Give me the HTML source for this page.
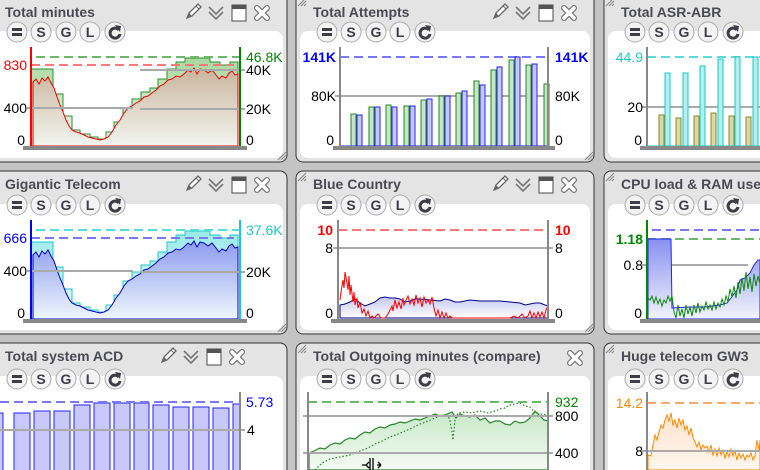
<!DOCTYPE html>
<html><head><meta charset="utf-8"><style>
html,body{margin:0;padding:0;background:#c4c4c4;overflow:hidden}
svg{display:block;font-family:"Liberation Sans",sans-serif}
.t{font-weight:bold;font-size:14px;fill:#4a4a55}
.l{font-size:14px;fill:#000}
.r{font-size:14px;fill:#000;text-anchor:end}
.b{font-weight:bold;font-size:14px;fill:#3d3d48;text-anchor:middle}
</style></head><body>
<svg width="760" height="470" viewBox="0 0 760 470" xmlns="http://www.w3.org/2000/svg">
<defs>
<linearGradient id="gBrown" x1="0" y1="0" x2="0" y2="1"><stop offset="0" stop-color="#c9b49c"/><stop offset="1" stop-color="#f2f5ef"/></linearGradient>
<linearGradient id="gGreen" x1="0" y1="0" x2="0" y2="1"><stop offset="0" stop-color="#a8d8a0"/><stop offset="1" stop-color="#eef7ee"/></linearGradient>
<linearGradient id="gBlue" x1="0" y1="0" x2="0" y2="1"><stop offset="0" stop-color="#8d9cf0"/><stop offset="1" stop-color="#eef6fd"/></linearGradient>
<linearGradient id="gCyan" x1="0" y1="0" x2="0" y2="1"><stop offset="0" stop-color="#9beaea"/><stop offset="1" stop-color="#e8fafa"/></linearGradient>
<linearGradient id="gLav" x1="0" y1="0" x2="0" y2="1"><stop offset="0" stop-color="#c4c8f0"/><stop offset="1" stop-color="#ffffff"/></linearGradient>
<linearGradient id="gCpu" x1="0" y1="0" x2="0" y2="1"><stop offset="0" stop-color="#8890f0"/><stop offset="1" stop-color="#f2f4fb"/></linearGradient>
<linearGradient id="gOut" x1="0" y1="0" x2="0" y2="1"><stop offset="0" stop-color="#c8e8c8"/><stop offset="1" stop-color="#f4fbf4"/></linearGradient>
<linearGradient id="gOr" x1="0" y1="0" x2="0" y2="1"><stop offset="0" stop-color="#fde3cc"/><stop offset="1" stop-color="#fff6ee"/></linearGradient>
<g id="btns">
<circle cx="0" cy="0" r="10" fill="#f3f3f3" stroke="#aaa"/><rect x="-5" y="-4" width="10" height="3" fill="#3d3d48"/><rect x="-5" y="1" width="10" height="3" fill="#3d3d48"/>
<circle cx="24" cy="0" r="10" fill="#f3f3f3" stroke="#aaa"/><text x="24" y="5" class="b">S</text>
<circle cx="49" cy="0" r="10" fill="#f3f3f3" stroke="#aaa"/><text x="49" y="5" class="b">G</text>
<circle cx="73" cy="0" r="10" fill="#f3f3f3" stroke="#aaa"/><text x="73" y="5" class="b">L</text>
<circle cx="98" cy="0" r="10" fill="#f3f3f3" stroke="#aaa"/><path d="M102 -2 A5 5 0 1 0 103 2" fill="none" stroke="#3d3d48" stroke-width="3"/><path d="M98 -7 L104 -6 L103 0 Z" fill="#3d3d48"/>
</g>
<g id="xic"><path d="M-5 -5 L5 5 M5 -5 L-5 5" stroke="#777" stroke-width="6" stroke-linecap="round"/><path d="M-5 -5 L5 5 M5 -5 L-5 5" stroke="#fff" stroke-width="3.5" stroke-linecap="round"/></g>
<g id="icons">
<path d="M0 14 L2 9 L11 0 L14 3 L5 12 Z" fill="#fff" stroke="#666" stroke-width="1.3"/><path d="M9 2 L12 5" stroke="#666"/><path d="M0 14 L2 9 L5 12Z" fill="#666"/>
<path d="M22 3 L29 10 L36 3 M22 8 L29 15 L36 8" fill="none" stroke="#777" stroke-width="1.6"/>
<rect x="45" y="1" width="14" height="16" fill="#fff" stroke="#666" stroke-width="1.2"/><rect x="45" y="1" width="14" height="4" fill="#555"/>
<use href="#xic" x="75" y="9"/>
</g>
<path id="hatch" d="M0 8 L8 0 M3 8 L8 3 M6 8 L8 6" stroke="#888" stroke-width="1"/>
</defs>

<rect x="-10" y="-10" width="297" height="172" rx="7" fill="#e4e4e4" stroke="#333"/>
<rect x="-6" y="31" width="289" height="127" rx="8" fill="#fff"/>
<rect x="296" y="-10" width="298" height="172" rx="7" fill="#e4e4e4" stroke="#333"/>
<rect x="300" y="31" width="290" height="127" rx="8" fill="#fff"/>
<rect x="604" y="-10" width="170" height="172" rx="7" fill="#e4e4e4" stroke="#333"/>
<rect x="608" y="31" width="170" height="127" rx="8" fill="#fff"/>
<rect x="-10" y="171" width="297" height="163" rx="7" fill="#e4e4e4" stroke="#333"/>
<rect x="-6" y="204" width="289" height="126" rx="8" fill="#fff"/>
<rect x="296" y="171" width="298" height="163" rx="7" fill="#e4e4e4" stroke="#333"/>
<rect x="300" y="204" width="290" height="126" rx="8" fill="#fff"/>
<rect x="604" y="171" width="170" height="163" rx="7" fill="#e4e4e4" stroke="#333"/>
<rect x="608" y="204" width="170" height="126" rx="8" fill="#fff"/>
<rect x="-10" y="343" width="297" height="140" rx="7" fill="#e4e4e4" stroke="#333"/>
<rect x="-6" y="376" width="289" height="110" rx="8" fill="#fff"/>
<rect x="296" y="343" width="298" height="140" rx="7" fill="#e4e4e4" stroke="#333"/>
<rect x="300" y="376" width="290" height="110" rx="8" fill="#fff"/>
<rect x="604" y="343" width="170" height="140" rx="7" fill="#e4e4e4" stroke="#333"/>
<rect x="608" y="376" width="170" height="110" rx="8" fill="#fff"/>

<use href="#hatch" x="278" y="152"/><use href="#hatch" x="585" y="152"/>
<use href="#hatch" x="278" y="324"/><use href="#hatch" x="585" y="324"/>
<use href="#hatch" x="298" y="-2"/><use href="#hatch" x="606" y="-2"/>
<use href="#hatch" x="298" y="173"/><use href="#hatch" x="606" y="173"/><use href="#hatch" x="298" y="345"/><use href="#hatch" x="606" y="345"/>

<text x="5" y="17" class="t">Total minutes</text>
<text x="313" y="17" class="t">Total Attempts</text>
<text x="621" y="17" class="t">Total ASR-ABR</text>
<text x="5" y="189" class="t">Gigantic Telecom</text>
<text x="313" y="189" class="t">Blue Country</text>
<text x="621" y="189" class="t">CPU load &amp; RAM use</text>
<text x="5" y="361" class="t">Total system ACD</text>
<text x="313" y="361" class="t">Total Outgoing minutes (compare)</text>
<text x="621" y="361" class="t">Huge telecom GW3</text>

<use href="#icons" x="187" y="4"/><use href="#icons" x="494" y="4"/>
<use href="#icons" x="187" y="176"/><use href="#icons" x="494" y="176"/>
<use href="#icons" x="162" y="348"/><use href="#xic" x="575" y="358"/>

<use href="#btns" x="17" y="32"/><use href="#btns" x="327" y="32"/><use href="#btns" x="635" y="32"/>
<use href="#btns" x="17" y="205"/><use href="#btns" x="327" y="205"/><use href="#btns" x="635" y="205"/>
<use href="#btns" x="17" y="379"/><use href="#btns" x="327" y="379"/><use href="#btns" x="635" y="379"/>

<!-- Chart 1 -->
<path d="M31 146 L31 69 L53 69 L53 94 L63 94 L63 116 L72 116 L72 130 L80 130 L80 134 L90 134 L90 137 L98 137 L98 139 L106 139 L106 132 L114 132 L114 122 L123 122 L123 108 L132 108 L132 99 L141 99 L141 92 L150 92 L150 88 L158 88 L158 79 L167 79 L167 69 L176 69 L176 62 L185 62 L185 58 L210 58 L210 62 L220 62 L220 65 L230 65 L230 62 L238 62 L238 146 Z" fill="url(#gGreen)" stroke="#2f8f2f" stroke-width="1"/>
<path d="M33 146 L33 82 L36 79 L39 84 L42 78 L45 81 L48 77 L51 83 L54 88 L57 97 L60 105 L63 112 L66 120 L69 126 L72 130 L76 132 L80 133 L84 135 L88 137 L92 138 L96 139 L100 140 L104 139 L108 137 L112 132 L116 125 L120 120 L124 113 L128 108 L132 106 L136 103 L140 101 L144 97 L148 96 L152 93 L156 90 L160 86 L164 84 L168 80 L172 79 L176 76 L180 77 L184 74 L188 70 L191 72 L194 68 L197 74 L200 69 L204 70 L208 73 L212 70 L216 75 L219 79 L222 76 L226 78 L229 73 L232 71 L235 75 L238 74 L238 146 Z" fill="url(#gBrown)" stroke="#e00" stroke-width="1"/>
<line x1="36" y1="57" x2="240" y2="57" stroke="#6bb86b" stroke-width="2" stroke-dasharray="9,5"/>
<line x1="31" y1="65" x2="234" y2="65" stroke="#f77" stroke-width="2" stroke-dasharray="9,5"/>
<line x1="27" y1="108" x2="133" y2="108" stroke="#aaa" stroke-width="2"/>
<line x1="140" y1="109" x2="245" y2="109" stroke="#aaa" stroke-width="2"/>
<line x1="140" y1="70" x2="245" y2="70" stroke="#aaa" stroke-width="2"/>
<line x1="31" y1="47" x2="31" y2="147" stroke="#f00" stroke-width="2"/>
<line x1="240" y1="47" x2="240" y2="147" stroke="#080" stroke-width="2"/>
<rect x="23" y="146" width="224" height="4" fill="#888"/>
<text x="27" y="70" class="r" style="fill:#f00">830</text>
<text x="27" y="113" class="r">400</text><text x="25" y="145" class="r">0</text>
<text x="246" y="62" class="l" style="fill:#080">46.8K</text>
<text x="246" y="75" class="l">40K</text><text x="246" y="114" class="l">20K</text><text x="246" y="145" class="l">0</text>

<!-- Chart 2 -->
<line x1="340" y1="57" x2="548" y2="57" stroke="#77f" stroke-width="2" stroke-dasharray="9,5"/>
<line x1="335" y1="96" x2="548" y2="96" stroke="#aaa" stroke-width="2"/>
<g fill="#c6e6c6" stroke="#282">
<rect x="351" y="114" width="5" height="32"/><rect x="369" y="107" width="5" height="39"/><rect x="386" y="105" width="5" height="41"/><rect x="404" y="106" width="5" height="40"/><rect x="421" y="100" width="5" height="46"/><rect x="439" y="96" width="5" height="50"/><rect x="456" y="93" width="5" height="53"/><rect x="474" y="81" width="5" height="65"/><rect x="491" y="70" width="5" height="76"/><rect x="509" y="60" width="5" height="86"/><rect x="526" y="65" width="5" height="81"/><rect x="544" y="84" width="5" height="62"/>
</g>
<g fill="#c8c8f6" stroke="#22f">
<rect x="357" y="115" width="5" height="31"/><rect x="375" y="107" width="5" height="39"/><rect x="392" y="107" width="5" height="39"/><rect x="410" y="106" width="5" height="40"/><rect x="427" y="99" width="5" height="47"/><rect x="445" y="96" width="5" height="50"/><rect x="462" y="91" width="5" height="55"/><rect x="480" y="85" width="5" height="61"/><rect x="497" y="67" width="5" height="79"/><rect x="515" y="57" width="5" height="89"/><rect x="532" y="64" width="5" height="82"/>
</g>
<line x1="340" y1="146" x2="548" y2="146" stroke="#22f"/>
<line x1="340" y1="47" x2="340" y2="147" stroke="#888" stroke-width="2"/>
<line x1="548" y1="47" x2="548" y2="147" stroke="#888" stroke-width="2"/>
<rect x="333" y="146" width="222" height="4" fill="#888"/>
<text x="336" y="62" class="r" style="fill:#00f;font-weight:bold">141K</text>
<text x="555" y="62" class="l" style="fill:#00f;font-weight:bold">141K</text>
<text x="336" y="101" class="r">80K</text><text x="555" y="101" class="l">80K</text>
<text x="334" y="145" class="r">0</text><text x="555" y="145" class="l">0</text>

<!-- Chart 3 -->
<line x1="647" y1="57" x2="760" y2="57" stroke="#5dd" stroke-width="2" stroke-dasharray="9,5"/>
<line x1="642" y1="107" x2="760" y2="107" stroke="#aaa" stroke-width="2"/>
<g fill="#dcd7a8" stroke="#8a8a22">
<rect x="659" y="115" width="5" height="31"/><rect x="676" y="118" width="5" height="28"/><rect x="694" y="116" width="5" height="30"/><rect x="711" y="113" width="5" height="33"/><rect x="729" y="116" width="5" height="30"/><rect x="746" y="117" width="5" height="29"/>
</g>
<g fill="#b2f0f0" stroke="#1cc8c8">
<rect x="665" y="73" width="5" height="73"/><rect x="683" y="73" width="5" height="73"/><rect x="700" y="66" width="5" height="80"/><rect x="718" y="59" width="5" height="87"/><rect x="735" y="57" width="5" height="89"/><rect x="753" y="57" width="5" height="89"/>
</g>
<line x1="647" y1="146" x2="760" y2="146" stroke="#1cc8c8"/>
<line x1="647" y1="47" x2="647" y2="147" stroke="#888" stroke-width="2"/>
<rect x="640" y="146" width="120" height="4" fill="#888"/>
<text x="643" y="62" class="r" style="fill:#1cc8c8">44.9</text>
<text x="643" y="112" class="r">20</text><text x="642" y="145" class="r">0</text>

<!-- Chart 4 -->
<g transform="translate(0,173)">
<path d="M31 146 L31 69 L53 69 L53 94 L63 94 L63 116 L72 116 L72 130 L80 130 L80 134 L90 134 L90 137 L98 137 L98 139 L106 139 L106 132 L114 132 L114 122 L123 122 L123 108 L132 108 L132 99 L141 99 L141 92 L150 92 L150 88 L158 88 L158 79 L167 79 L167 69 L176 69 L176 62 L185 62 L185 58 L210 58 L210 62 L220 62 L220 65 L230 65 L230 62 L238 62 L238 146 Z" fill="url(#gCyan)" stroke="#1cc8c8" stroke-width="1"/>
<path d="M33 146 L33 82 L36 79 L39 84 L42 78 L45 81 L48 77 L51 83 L54 88 L57 97 L60 105 L63 112 L66 120 L69 126 L72 130 L76 132 L80 133 L84 135 L88 137 L92 138 L96 139 L100 140 L104 139 L108 137 L112 132 L116 125 L120 120 L124 113 L128 108 L132 106 L136 103 L140 101 L144 97 L148 96 L152 93 L156 90 L160 86 L164 84 L168 80 L172 79 L176 76 L180 77 L184 74 L188 70 L191 72 L194 68 L197 74 L200 69 L204 70 L208 73 L212 70 L216 75 L219 79 L222 76 L226 78 L229 73 L232 71 L235 75 L238 74 L238 146 Z" fill="url(#gBlue)" stroke="#00c" stroke-width="1"/>
</g>
<line x1="36" y1="230" x2="240" y2="230" stroke="#5dd" stroke-width="2" stroke-dasharray="9,5"/>
<line x1="31" y1="238" x2="234" y2="238" stroke="#77f" stroke-width="2" stroke-dasharray="9,5"/>
<line x1="27" y1="271" x2="133" y2="271" stroke="#aaa" stroke-width="2"/>
<line x1="140" y1="272" x2="245" y2="272" stroke="#aaa" stroke-width="2"/>
<line x1="31" y1="220" x2="31" y2="320" stroke="#00f" stroke-width="2"/>
<line x1="240" y1="220" x2="240" y2="320" stroke="#1cc8c8" stroke-width="2"/>
<rect x="23" y="319" width="224" height="4" fill="#888"/>
<text x="27" y="243" class="r" style="fill:#00f">666</text>
<text x="27" y="276" class="r">400</text><text x="25" y="318" class="r">0</text>
<text x="246" y="235" class="l" style="fill:#1cc8c8">37.6K</text>
<text x="246" y="277" class="l">20K</text><text x="246" y="318" class="l">0</text>

<!-- Chart 5 -->
<line x1="338" y1="230" x2="548" y2="230" stroke="#f77" stroke-width="2" stroke-dasharray="9,5"/>
<line x1="333" y1="248" x2="553" y2="248" stroke="#aaa" stroke-width="2"/>
<path d="M340 318 L340 305 L345 304 L350 302 L355 299 L360 303 L365 306 L370 304 L375 302 L380 298 L385 297 L390 298 L395 298 L400 299 L405 302 L410 301 L415 299 L420 299 L430 300 L440 301 L445 299 L450 300 L455 302 L460 302 L470 300 L480 301 L490 301 L500 301 L510 302 L520 303 L525 305 L530 304 L535 303 L540 303 L545 305 L548 306 L548 318 Z" fill="url(#gLav)" stroke="#008" stroke-width="1"/>
<polyline fill="none" stroke="#f00" stroke-width="1" points="340,300 341,292 343,280 344,288 345,272 347,283 348,290 349,276 350,295 351,285 353,302 354,292 355,305 357,298 358,308 360,302 362,313 364,309 366,316 368,311 370,318 372,316 374,318 378,314 381,318 385,318 388,314 390,310 392,306 393,311 395,300 397,308 399,302 401,309 403,298 404,305 406,300 408,296 410,304 412,299 414,305 416,295 418,303 420,298 422,307 424,297 426,303 428,300 430,304 432,297 434,308 436,316 438,310 440,318 442,312 444,318 446,313 448,318 450,316 452,318 470,318 490,318 510,318 514,316 518,318 522,314 525,318 528,316 530,311 532,318 534,313 536,318 538,312 540,317 542,312 544,318 546,310 548,306"/>
<line x1="338" y1="220" x2="338" y2="320" stroke="#888" stroke-width="2"/>
<line x1="548" y1="220" x2="548" y2="320" stroke="#888" stroke-width="2"/>
<rect x="331" y="319" width="224" height="4" fill="#888"/>
<text x="333" y="235" class="r" style="fill:#f00;font-weight:bold">10</text><text x="555" y="235" class="l" style="fill:#f00;font-weight:bold">10</text>
<text x="333" y="253" class="r">8</text><text x="555" y="253" class="l">8</text>
<text x="333" y="318" class="r">0</text><text x="555" y="318" class="l">0</text>

<!-- Chart 6 -->
<line x1="652" y1="230" x2="760" y2="230" stroke="#77f" stroke-width="2" stroke-dasharray="9,5"/>
<line x1="647" y1="239" x2="760" y2="239" stroke="#6b6" stroke-width="2" stroke-dasharray="9,5"/>
<line x1="642" y1="265" x2="748" y2="265" stroke="#aaa" stroke-width="2"/>
<path d="M648 319 L648 239 L671 239 L672 308 L690 307 L705 307 L712 306 L720 305 L727 303 L731 298 L737 290 L740 280 L745 278 L750 273 L754 265 L758 260 L760 260 L760 319 Z" fill="url(#gCpu)" stroke="#22f" stroke-width="1"/>
<polyline fill="none" stroke="#181" stroke-width="1" points="648,298 650,300 652,296 654,303 656,297 658,304 660,299 662,306 664,300 666,303 668,296 670,301 672,296 674,312 676,318 678,305 680,316 682,309 684,318 686,305 688,314 690,307 692,316 694,305 696,313 698,303 700,312 702,306 704,310 706,302 708,309 710,305 712,310 714,302 716,309 718,303 720,307 722,299 724,305 726,296 728,302 730,289 732,297 734,286 736,298 738,282 740,294 742,278 744,291 746,272 748,289 750,277 752,292 754,274 756,286 758,276 760,284"/>
<line x1="647" y1="220" x2="647" y2="320" stroke="#080" stroke-width="2"/>
<rect x="640" y="319" width="120" height="4" fill="#888"/>
<text x="643" y="244" class="r" style="fill:#080;font-weight:bold">1.18</text>
<text x="643" y="270" class="r">0.8</text><text x="642" y="318" class="r">0</text>

<!-- Chart 7 -->
<g fill="#c8c8fb" stroke="#22f">
<rect x="-4" y="413" width="7" height="60"/><rect x="14" y="413" width="16" height="60"/><rect x="34" y="411" width="16" height="62"/><rect x="54" y="411" width="16" height="62"/><rect x="74" y="405" width="16" height="68"/><rect x="94" y="403" width="16" height="70"/><rect x="114" y="403" width="16" height="70"/><rect x="134" y="403" width="15" height="70"/><rect x="153" y="405" width="16" height="68"/><rect x="173" y="407" width="16" height="66"/><rect x="193" y="407" width="16" height="66"/><rect x="213" y="408" width="16" height="65"/><rect x="233" y="404" width="7" height="69"/>
</g>
<line x1="0" y1="402" x2="238" y2="402" stroke="#77f" stroke-width="2" stroke-dasharray="9,5"/>
<line x1="0" y1="430" x2="245" y2="430" stroke="#aaa" stroke-width="2"/>
<line x1="240" y1="392" x2="240" y2="470" stroke="#888" stroke-width="2"/>
<text x="246" y="407" class="l" style="fill:#00f">5.73</text><text x="247" y="435" class="l">4</text>

<!-- Chart 8 -->
<path d="M309 470 L309 453 L314 451 L320 448 L325 449 L330 445 L335 443 L340 444 L345 440 L350 438 L355 439 L360 435 L365 432 L370 433 L375 429 L380 427 L385 428 L390 425 L395 424 L400 422 L405 423 L410 421 L415 419 L420 420 L425 418 L430 416 L435 414 L440 416 L445 415 L452 412 L456 418 L460 414 L465 416 L470 417 L475 415 L480 420 L485 418 L490 423 L495 421 L500 421 L505 424 L510 425 L515 421 L520 423 L525 422 L530 418 L535 411 L540 416 L544 420 L548 421 L548 470 Z" fill="url(#gOut)" stroke="#282" stroke-width="1.2"/>
<polyline fill="none" stroke="#282" stroke-width="1.2" stroke-dasharray="1.5,2" points="315,470 322,463 330,459 340,457 350,455 360,451 368,448 375,444 382,441 390,437 398,434 405,431 412,428 420,424 428,421 435,418 442,415 448,416 450,421 452,432 453,440 455,420 458,413 465,412 472,413 480,411 488,413 495,411 500,409 505,408 510,405 515,404 520,403 525,406 530,407 535,413 540,414 548,415"/>
<line x1="308" y1="402" x2="548" y2="402" stroke="#6b6" stroke-width="2" stroke-dasharray="9,5"/>
<line x1="303" y1="416" x2="553" y2="416" stroke="#aaa" stroke-width="2"/>
<line x1="303" y1="453" x2="553" y2="453" stroke="#aaa" stroke-width="2"/>
<line x1="308" y1="392" x2="308" y2="470" stroke="#888" stroke-width="2"/>
<line x1="548" y1="392" x2="548" y2="470" stroke="#888" stroke-width="2"/>
<text x="555" y="407" class="l" style="fill:#080">932</text>
<text x="555" y="421" class="l">800</text><text x="555" y="458" class="l">400</text>
<path d="M366 465 L362 465 M366 465 L369 462 M366 465 L369 468 M370 458 L370 470 M373 458 L373 470 M377 465 L381 465 M381 465 L378 462 M381 465 L378 468" stroke="#000" stroke-width="1.3" fill="none"/>

<!-- Chart 9 -->
<path d="M648 470 L648 455 L651 456 L653 445 L655 435 L657 440 L659 432 L661 425 L663 428 L665 420 L667 415 L669 421 L671 413 L673 425 L675 420 L677 428 L679 418 L681 425 L683 420 L685 430 L687 426 L689 435 L691 428 L693 438 L695 442 L697 447 L699 442 L701 450 L703 445 L705 448 L707 446 L709 452 L711 445 L713 455 L715 449 L717 456 L719 448 L721 455 L723 450 L725 458 L727 452 L729 457 L731 449 L733 456 L735 451 L737 460 L739 453 L741 458 L743 454 L745 460 L747 455 L749 457 L751 453 L753 460 L755 456 L757 440 L759 450 L760 440 L760 470 Z" fill="url(#gOr)" stroke="#f80" stroke-width="1"/>
<line x1="647" y1="403" x2="760" y2="403" stroke="#fa6" stroke-width="2" stroke-dasharray="9,5"/>
<line x1="642" y1="451" x2="760" y2="451" stroke="#aaa" stroke-width="2"/>
<line x1="647" y1="392" x2="647" y2="470" stroke="#888" stroke-width="2"/>
<text x="643" y="408" class="r" style="fill:#f80">14.2</text><text x="643" y="456" class="r">8</text>
</svg>
</body></html>
